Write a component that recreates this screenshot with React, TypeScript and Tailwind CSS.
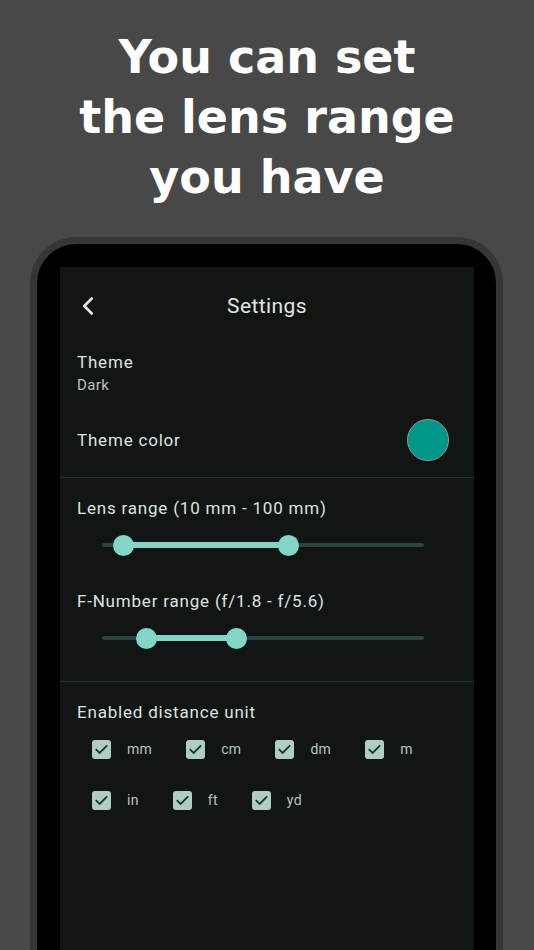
import { ChevronLeft } from "lucide-react";

const sans = { fontFamily: "Roboto, 'Noto Sans', sans-serif" };

type Range = { lo: number; hi: number };

const RangeSlider = ({ lo, hi }: Range) => {
  return (
    <div className="h-[50px] flex items-center">
      <div className="relative ml-[42px] w-[322px] h-[4px] rounded-full bg-[#2a433e]">
        <div
          className="absolute top-[-1px] h-[6px] bg-[#83d5c6]"
          style={{ left: lo, width: hi - lo }}
        />
        <div
          className="absolute top-[-8.5px] w-[21px] h-[21px] -ml-[10.5px] rounded-full bg-[#83d5c6]"
          style={{ left: lo }}
        />
        <div
          className="absolute top-[-8.5px] w-[21px] h-[21px] -ml-[10.5px] rounded-full bg-[#83d5c6]"
          style={{ left: hi }}
        />
      </div>
    </div>
  );
};

const Unit = ({ label }: { label: string }) => (
  <div className="flex items-center gap-[16px]">
    <div className="w-[19px] h-[19px] rounded-[3px] bg-[#b0ccc5] flex items-center justify-center">
      <svg width="15" height="15" viewBox="0 0 24 24" fill="none">
        <path
          d="M4 12.5l5 5L20 6.5"
          stroke="#0e3a33"
          strokeWidth="3"
          strokeLinecap="square"
        />
      </svg>
    </div>
    <span className="text-[14px] leading-[19px] text-[#bcc4c0] tracking-[0.3px]">{label}</span>
  </div>
);

export default function App() {
  return (
    <div className="w-[534px] h-[950px] overflow-hidden bg-[#484848] flex flex-col">
      <h1
        className="pt-[27px] text-center text-white font-bold text-[46px] leading-[60px]"
        style={{ fontFamily: "'DejaVu Sans', Verdana, sans-serif" }}
      >
        You can set
        <br />
        the lens range
        <br />
        you have
      </h1>

      <div className="mt-[30px] ml-[30px] w-[473px] h-[740px] shrink-0 border-[7px] border-b-0 border-[#363636] rounded-t-[46px] bg-black pt-[23px] px-[23px] pr-[22px]">
        <div className="h-full bg-[#111614] text-[#dde3e0]" style={sans}>
          <div className="relative h-[76px] pt-[3px] flex items-center justify-center">
            <ChevronLeft
              className="absolute left-[13px] top-[24px] w-[30px] h-[30px] text-[#e6e8e6]"
              strokeWidth={2.1}
            />
            <span className="text-[21px] tracking-[0.4px] text-[#e3e5e3]">Settings</span>
          </div>

          <div className="h-[62px] pt-[7px] pl-[17px]">
            <div className="text-[17px] leading-[24px] tracking-[0.8px]">Theme</div>
            <div className="text-[15px] leading-[22px] tracking-[0.4px] text-[#b9c2be]">Dark</div>
          </div>

          <div className="h-[72px] pb-[2px] pl-[17px] pr-[25px] flex items-center justify-between">
            <span className="text-[17px] leading-[24px] tracking-[0.8px]">Theme color</span>
            <div className="w-[42px] h-[42px] rounded-full bg-[#009688] border border-[#8f9a96]" />
          </div>

          <div className="h-px bg-[#2a302e]" />

          <div className="pt-[18px] pb-[18px]">
            <div className="pl-[17px] text-[17px] leading-[24px] tracking-[0.8px]">
              Lens range (10 mm - 100 mm)
            </div>
            <RangeSlider lo={21} hi={186} />
            <div className="mt-[19px] pl-[17px] text-[17px] leading-[24px] tracking-[0.8px]">
              F-Number range (f/1.8 - f/5.6)
            </div>
            <RangeSlider lo={44} hi={134} />
          </div>

          <div className="h-px bg-[#2a302e]" />

          <div className="pt-[18px]">
            <div className="pl-[17px] text-[17px] leading-[24px] tracking-[0.8px]">
              Enabled distance unit
            </div>
            <div className="mt-[16px] pl-[32px] flex gap-[34px]">
              <Unit label="mm" />
              <Unit label="cm" />
              <Unit label="dm" />
              <Unit label="m" />
            </div>
            <div className="mt-[32px] pl-[32px] flex gap-[34px]">
              <Unit label="in" />
              <Unit label="ft" />
              <Unit label="yd" />
            </div>
          </div>
        </div>
      </div>
    </div>
  );
}
